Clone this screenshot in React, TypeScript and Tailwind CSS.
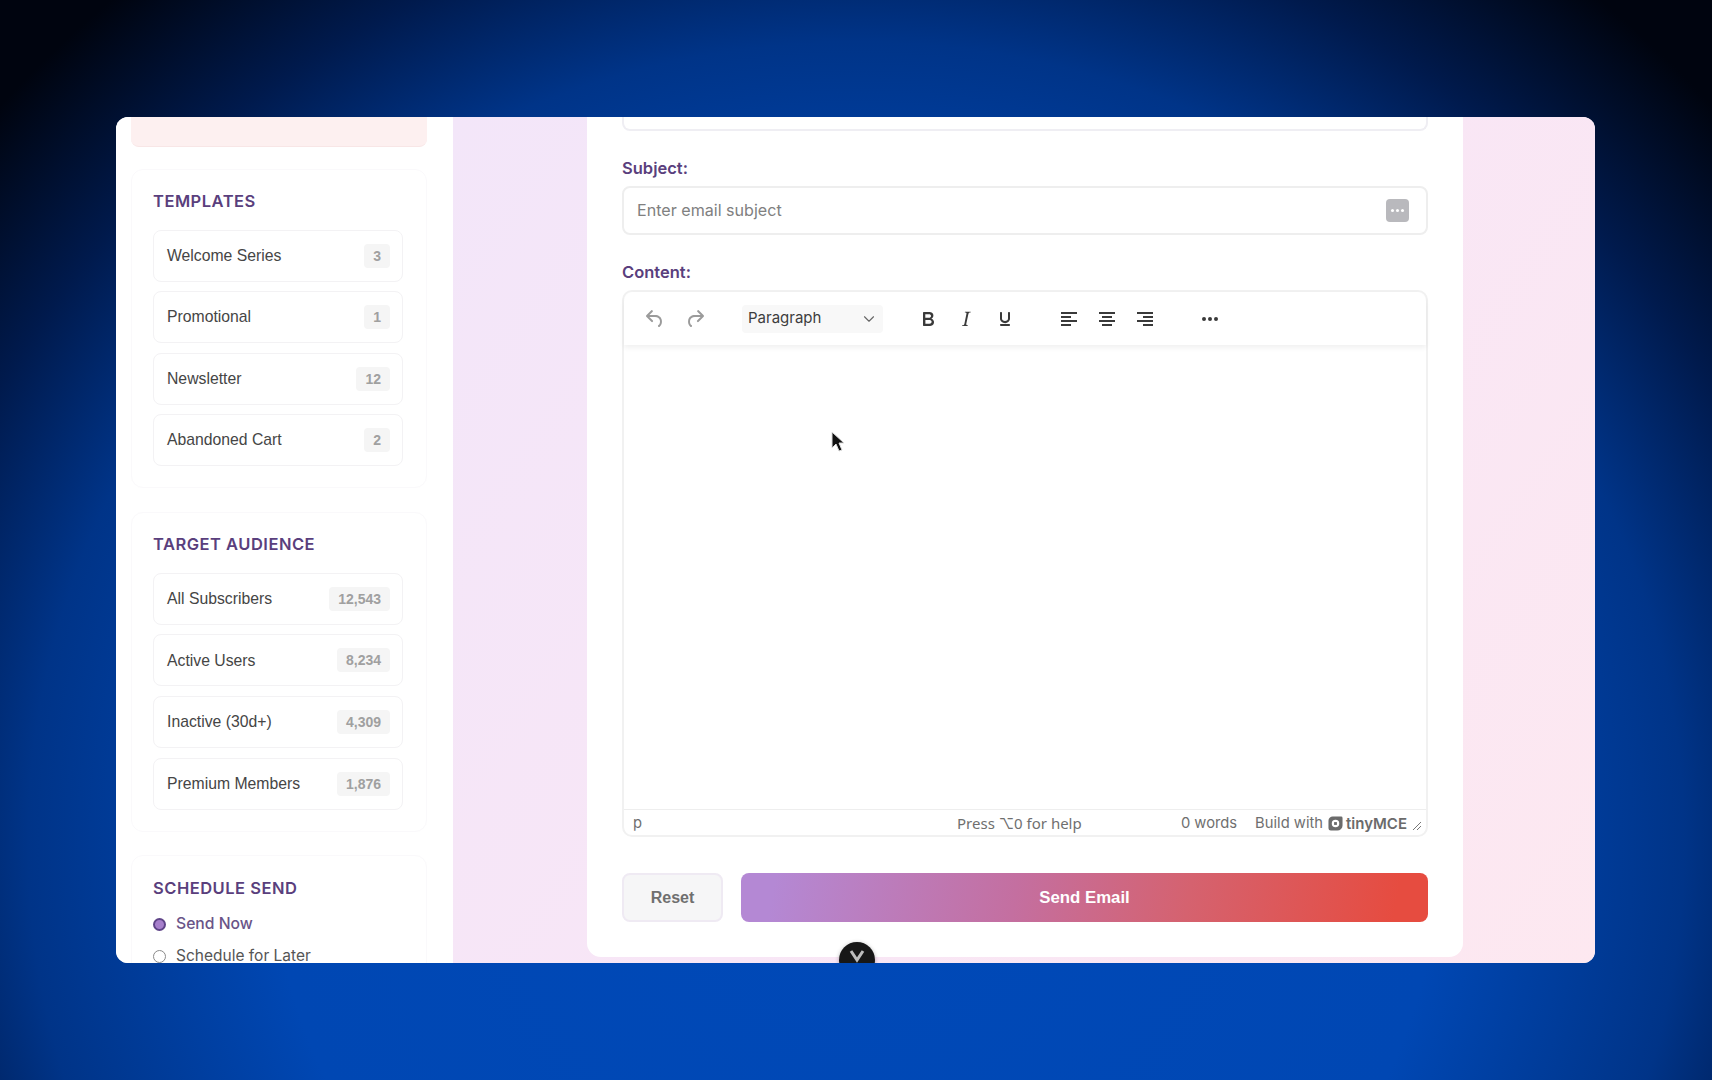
import { ChevronDown } from 'lucide-react';

const templates = [
  { name: 'Welcome Series', count: '3' },
  { name: 'Promotional', count: '1' },
  { name: 'Newsletter', count: '12' },
  { name: 'Abandoned Cart', count: '2' },
];

const audience = [
  { name: 'All Subscribers', count: '12,543' },
  { name: 'Active Users', count: '8,234' },
  { name: 'Inactive (30d+)', count: '4,309' },
  { name: 'Premium Members', count: '1,876' },
];

const icons = {
  undo: 'M6.4 8H12c3.7 0 6.2 2 6.8 5.1.6 2.7-.4 5.6-2.3 6.8a1 1 0 0 1-1-1.8c1.1-.6 1.8-2.7 1.4-4.6-.5-2.1-2.1-3.5-4.9-3.5H6.4l3.3 3.3a1 1 0 1 1-1.4 1.4l-5-5a1 1 0 0 1 0-1.4l5-5a1 1 0 0 1 1.4 1.4L6.4 8Z',
  redo: 'M17.6 8H12c-3.7 0-6.2 2-6.8 5.1-.6 2.7.4 5.6 2.3 6.8a1 1 0 0 0 1-1.8c-1.1-.6-1.8-2.7-1.4-4.6.5-2.1 2.1-3.5 4.9-3.5h5.6l-3.3 3.3a1 1 0 1 0 1.4 1.4l5-5a1 1 0 0 0 0-1.4l-5-5a1 1 0 0 0-1.4 1.4L17.6 8Z',
  bold: 'M7.8 19c-.3 0-.5 0-.6-.2l-.2-.5V5.7c0-.2 0-.4.2-.5l.6-.2h5c1.5 0 2.7.3 3.5 1 .7.6 1.1 1.4 1.1 2.5a3 3 0 0 1-.6 1.9c-.4.6-1 1-1.6 1.2.4.1.9.3 1.3.6s.8.7 1 1.2c.4.4.5 1 .5 1.6 0 1.3-.4 2.3-1.3 3-.8.7-2.1 1-3.8 1H7.8Zm5-8.3c.6 0 1.2-.1 1.6-.5.4-.3.6-.7.6-1.3 0-1.1-.8-1.7-2.3-1.7H9.3v3.5h3.4Zm.5 6c.7 0 1.3-.1 1.7-.4.4-.4.6-.9.6-1.5s-.2-1-.7-1.4c-.4-.3-1-.4-2-.4H9.4v3.8h4Z',
  italic: 'm16.7 4.7-.1.9h-.3c-.6 0-1 0-1.4.3-.3.3-.4.6-.5 1.1l-2.1 9.8v.6c0 .5.4.8 1.4.8h.2l-.2.8H8l.2-.8h.2c1.1 0 1.8-.5 2-1.5l2-9.8.1-.5c0-.6-.4-.8-1.4-.8h-.3l.2-.9h5.8Z',
  underline: 'M16 5c.6 0 1 .4 1 1v5.5a4 4 0 0 1-.4 1.8l-1 1.4a5.3 5.3 0 0 1-5.5 1 5 5 0 0 1-1.6-1c-.5-.4-.8-.9-1.1-1.4a4 4 0 0 1-.4-1.8V6c0-.6.4-1 1-1s1 .4 1 1v5.5c0 .3 0 .6.2 1l.6.7a3.3 3.3 0 0 0 2.2.8 3.4 3.4 0 0 0 2.2-.8c.3-.2.4-.5.6-.8l.2-.9V6c0-.6.4-1 1-1ZM8 17h8c.6 0 1 .4 1 1s-.4 1-1 1H8a1 1 0 0 1-1-1c0-.6.4-1 1-1Z',
  alignLeft: 'M4 5h16v2H4Zm0 4h10v2H4Zm0 4h16v2H4Zm0 4h10v2H4Z',
  alignCenter: 'M4 5h16v2H4Zm3 4h10v2H7Zm-3 4h16v2H4Zm3 4h10v2H7Z',
  alignRight: 'M4 5h16v2H4Zm6 4h10v2H10Zm-6 4h16v2H4Zm6 4h10v2H10Z',
  more: 'M6 10a2 2 0 1 1 0 4 2 2 0 0 1 0-4Zm6 0a2 2 0 1 1 0 4 2 2 0 0 1 0-4Zm6 0a2 2 0 1 1 0 4 2 2 0 0 1 0-4Z',
};

function ToolIcon({ d, className }: { d: string; className: string }) {
  return (
    <svg viewBox="0 0 24 24" className={`w-6 h-6 shrink-0 ${className}`} fill="currentColor">
      <path d={d} />
    </svg>
  );
}

function ListCard({ title, items, className }: { title: string; items: { name: string; count: string }[]; className: string }) {
  return (
    <div className={`w-[296px] shrink-0 rounded-[12px] border border-[#faf9fb] px-[21px] pt-[21px] pb-[21px] ${className}`}>
      <h3 className="font-['Inter',sans-serif] text-[16.5px] leading-[20px] font-semibold tracking-[0.5px] text-[#5a3f7d]">{title}</h3>
      <div className="mt-[18.5px] flex flex-col gap-[9.6px]">
        {items.map((item) => (
          <div key={item.name} className="flex h-[52px] w-[250px] items-center justify-between rounded-[8px] border border-[#f3f2f4] bg-white pl-[13px] pr-[12px]">
            <span className="font-['Liberation_Sans',sans-serif] text-[15.75px] text-[#454545]">{item.name}</span>
            <span className="rounded-[4px] bg-[#f5f5f5] px-[9px] py-[4px] font-['Liberation_Sans',sans-serif] text-[14px] leading-[16px] font-bold text-[#a0a0a0]">{item.count}</span>
          </div>
        ))}
      </div>
    </div>
  );
}

function Sidebar() {
  return (
    <aside className="flex w-[337px] shrink-0 flex-col bg-white pl-[15px]">
      <div className="h-[30px] w-[296px] shrink-0 rounded-b-[8px] border-b border-[#f8e6e6] bg-[#fdf0f0]" />
      <ListCard title="TEMPLATES" items={templates} className="mt-[22px]" />
      <ListCard title="TARGET AUDIENCE" items={audience} className="mt-[24px]" />
      <div className="mt-[23px] w-[296px] shrink-0 rounded-t-[12px] border border-[#faf9fb] px-[21px] pt-[22px]">
        <h3 className="font-['Inter',sans-serif] text-[16.5px] leading-[20px] font-semibold tracking-[0.5px] text-[#5a3f7d]">SCHEDULE SEND</h3>
        <div className="mt-[16.5px] flex h-[20px] items-center gap-[10px]">
          <span className="flex h-[13px] w-[13px] items-center justify-center rounded-full border-[2px] border-[#5f4488] bg-[#a67fcb]" />
          <span className="font-['Inter',sans-serif] text-[15.7px] font-medium text-[#6a5488]">Send Now</span>
        </div>
        <div className="mt-[12px] flex h-[20px] items-center gap-[10px]">
          <span className="h-[13px] w-[13px] rounded-full border border-[#8a8a8a] bg-white" />
          <span className="font-['Inter',sans-serif] text-[15.5px] text-[#555555]">Schedule for Later</span>
        </div>
      </div>
    </aside>
  );
}

function Toolbar() {
  return (
    <div className="relative flex h-[53px] shrink-0 items-center rounded-t-[10px] bg-white pl-[19px] shadow-[0_3px_5px_rgba(0,0,0,0.06)]">
      <ToolIcon d={icons.undo} className="text-[#9b9b9b]" />
      <ToolIcon d={icons.redo} className="ml-[16px] text-[#9b9b9b]" />
      <div className="ml-[35px] flex h-[28px] w-[141px] items-center justify-between rounded-[4px] bg-[#f8f8f8] pl-[6px] pr-[5px]">
        <span className="font-['Inter',sans-serif] text-[15px] text-[#3d3d3d]">Paragraph</span>
        <ChevronDown className="h-[18px] w-[18px] text-[#666666]" strokeWidth={1.5} />
      </div>
      <ToolIcon d={icons.bold} className="ml-[33px] text-[#3a3a3a]" />
      <ToolIcon d={icons.italic} className="ml-[14px] text-[#3a3a3a]" />
      <ToolIcon d={icons.underline} className="ml-[15px] text-[#3a3a3a]" />
      <ToolIcon d={icons.alignLeft} className="ml-[40px] text-[#3a3a3a]" />
      <ToolIcon d={icons.alignCenter} className="ml-[14px] text-[#3a3a3a]" />
      <ToolIcon d={icons.alignRight} className="ml-[14px] text-[#3a3a3a]" />
      <ToolIcon d={icons.more} className="ml-[41px] text-[#3a3a3a]" />
    </div>
  );
}

function StatusBar() {
  return (
    <div className="flex h-[26px] shrink-0 items-center border-t border-[#eeeeee] pl-[9px] pr-[4px] pt-[1px] font-['Inter',sans-serif] text-[14.75px] text-[#6f6f6f]">
      <span>p</span>
      <span className="ml-[315px] font-['Noto_Sans','Inter',sans-serif] text-[15px]">Press ⌥0 for help</span>
      <span className="ml-auto">0 words</span>
      <span className="ml-[18px]">Build with</span>
      <svg viewBox="0 0 16 16" className="ml-[5px] h-[15px] w-[15px]" fill="#6b6b6b">
        <path fillRule="evenodd" d="M5 .5h9A1.5 1.5 0 0 1 15.5 2v8a5.5 5.5 0 0 1-5.5 5.5H3A2.5 2.5 0 0 1 .5 13V5A4.5 4.5 0 0 1 5 .5Zm3 3.5a4 4 0 1 0 0 8 4 4 0 0 0 0-8Z" />
        <rect x="6.5" y="6.5" width="3" height="3" />
      </svg>
      <span className="ml-[3px] font-['Inter',sans-serif] text-[15px] leading-[15px] font-semibold text-[#6b6b6b]">tinyMCE</span>
      <svg viewBox="0 0 10 10" className="ml-[5px] mt-[6px] h-[10px] w-[10px]" stroke="#777777" strokeWidth="1" fill="none">
        <path d="M1 9 9 1M5 9 9 5" />
      </svg>
    </div>
  );
}

function MainCard() {
  return (
    <div className="ml-[134px] w-[876px] rounded-b-[14px] bg-white px-[35px] pb-[35px]">
      <div className="h-[14px] rounded-b-[8px] border-x-2 border-b-2 border-[#efeef3]" />
      <label className="mt-[27px] block font-['Inter',sans-serif] text-[16.5px] leading-[20px] font-semibold text-[#5a3f7d]">Subject:</label>
      <div className="mt-[8px] flex h-[49px] items-center justify-between rounded-[8px] border-2 border-[#eeeeee] pl-[13px] pr-[17px]">
        <span className="font-['Inter',sans-serif] text-[16.1px] text-[#808080]">Enter email subject</span>
        <span className="flex h-[23px] w-[23px] items-center justify-center gap-[2px] rounded-[4px] bg-[#b9b9bd]">
          <i className="h-[3px] w-[3px] rounded-full bg-white" />
          <i className="h-[3px] w-[3px] rounded-full bg-white" />
          <i className="h-[3px] w-[3px] rounded-full bg-white" />
        </span>
      </div>
      <label className="mt-[27px] block font-['Inter',sans-serif] text-[16.5px] leading-[20px] font-semibold text-[#5a3f7d]">Content:</label>
      <div className="mt-[8px] flex h-[547px] flex-col rounded-[10px] border-2 border-[#f1f1f1]">
        <Toolbar />
        <div className="flex-1" />
        <StatusBar />
      </div>
      <div className="mt-[36px] flex gap-[18px]">
        <button className="h-[49px] w-[101px] rounded-[8px] border-2 border-[#efeaf3] bg-[#f6f6f7] font-['Liberation_Sans',sans-serif] text-[16px] font-bold text-[#6f6f6f]">Reset</button>
        <button className="h-[49px] flex-1 rounded-[8px] bg-[linear-gradient(100deg,#b488d4_5%,#c46fa0_40%,#d5626f_65%,#e64c40_95%)] font-['Liberation_Sans',sans-serif] text-[16.8px] font-bold text-white">Send Email</button>
      </div>
    </div>
  );
}

export default function App() {
  return (
    <div className="h-[1080px] w-[1712px] overflow-hidden bg-[radial-gradient(ellipse_62%_95%_at_50%_78%,#0049b8_0%,#0047b3_55%,#003488_78%,#001a4d_92%,#00040f_108%)] pl-[116px] pt-[117px]">
      <div className="relative flex h-[846px] w-[1479px] overflow-hidden rounded-[12px] bg-white">
        <Sidebar />
        <main className="flex-1 bg-[linear-gradient(125deg,#f3e6f9_0%,#f8e6f6_50%,#fde8f0_100%)]">
          <MainCard />
        </main>
        {/* dark scroll button, cut off by the window edge */}
        <div className="absolute left-[723px] top-[825px] flex h-[36px] w-[36px] justify-center rounded-full bg-[#171717] pt-[6px] shadow-[0_1px_4px_rgba(0,0,0,0.3)]">
          <svg viewBox="0 0 16 16" className="h-[16px] w-[16px]" fill="none" stroke="#bdbdbd" strokeWidth="3">
            <path d="m2 3 6 9 6-9" />
          </svg>
        </div>
        {/* mouse pointer */}
        <svg viewBox="0 0 14 22" className="absolute left-[715px] top-[314px] h-[22px] w-[14px]">
          <path d="M1 1v16l4-4 3 7 3-1-3-7h5Z" fill="#111111" stroke="#dddddd" strokeWidth="1" />
        </svg>
      </div>
    </div>
  );
}
